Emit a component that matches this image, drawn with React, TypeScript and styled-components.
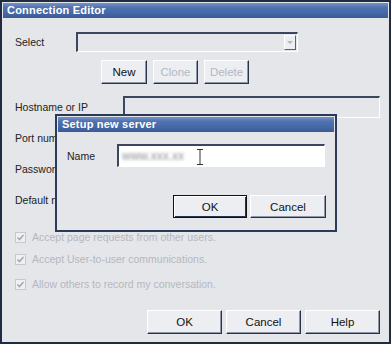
import React from "react";
import styled, { createGlobalStyle } from "styled-components";

const Global = createGlobalStyle`
  html, body { margin: 0; padding: 0; background: #e4e6ea; }
  body { font-family: "Liberation Sans", Arial, sans-serif; font-size: 11px; color: #1a1a1a; }
`;

const Window = styled.div`
  position: relative;
  box-sizing: border-box;
  width: 391px;
  height: 344px;
  border: 2px solid #1f2b40;
  background: #e4e6ea;
  display: flex;
  flex-direction: column;
`;

const TitleBar = styled.div`
  height: 15px;
  margin: 1px 1px 0 1px;
  background: linear-gradient(#7592c6 0%, #4f72b0 30%, #4467a5 70%, #3a5a94 100%);
  color: #fff;
  font-weight: bold;
  font-size: 11px;
  line-height: 15px;
  padding-left: 4px;
  display: flex;
  align-items: center;
  letter-spacing: 0.2px;
`;

const Body = styled.div`
  display: flex;
  flex-direction: column;
  padding: 14px 9px 0 13px;
`;

const Row = styled.div<{ $mt?: number }>`
  display: flex;
  align-items: center;
  margin-top: ${(p) => p.$mt ?? 0}px;
`;

const Label = styled.div<{ $w: number }>`
  width: ${(p) => p.$w}px;
  flex: none;
  white-space: nowrap;
  font-size: 10.5px;
  color: #222;
`;

const Sunken = styled.div<{ $w: number; $h: number; $bg?: string }>`
  box-sizing: border-box;
  width: ${(p) => p.$w}px;
  height: ${(p) => p.$h}px;
  background: ${(p) => p.$bg ?? "#e4e6ea"};
  border-style: solid;
  border-width: 2px 1px 1px 2px;
  border-color: #3a475e #ffffff #ffffff #3a475e;
  position: relative;
  display: flex;
  align-items: center;
  justify-content: flex-end;
`;

const Arrow = styled.div`
  box-sizing: border-box;
  width: 12px;
  height: 15px;
  margin-right: 1px;
  background: #eceef1;
  border: 1px solid;
  border-color: #ffffff #56627a #56627a #ffffff;
  display: flex;
  align-items: center;
  justify-content: center;
  &::after {
    content: "";
    border-left: 3px solid transparent;
    border-right: 3px solid transparent;
    border-top: 3px solid #b2b6bf;
  }
`;

const Button = styled.button<{ $w: number; $h?: number; $disabled?: boolean; $default?: boolean }>`
  box-sizing: border-box;
  width: ${(p) => p.$w}px;
  height: ${(p) => p.$h ?? 24}px;
  padding: 0;
  margin: 0;
  font-family: "Liberation Sans", Arial, sans-serif;
  font-size: 11.5px;
  color: ${(p) => (p.$disabled ? "#b4b8c0" : "#111")};
  background: #eceef1;
  border: 1px solid;
  border-color: ${(p) =>
    p.$default ? "#111 #111 #111 #111" : "#ffffff #26334b #26334b #ffffff"};
  box-shadow: ${(p) =>
    p.$default
      ? "inset 1px 1px #ffffff, inset -1px -1px #26334b"
      : "inset -1px -1px #8d97a9"};
  flex: none;
`;

const ButtonRow = styled.div<{ $gap: number; $ml?: number; $mt?: number; $end?: boolean }>`
  display: flex;
  gap: ${(p) => p.$gap}px;
  margin-left: ${(p) => p.$ml ?? 0}px;
  margin-top: ${(p) => p.$mt ?? 0}px;
  justify-content: ${(p) => (p.$end ? "flex-end" : "flex-start")};
`;

const Check = styled.div<{ $mt: number }>`
  display: flex;
  align-items: center;
  gap: 6px;
  margin-top: ${(p) => p.$mt}px;
  color: #b4b8c0;
  font-size: 10.5px;
`;

const Box = styled.div`
  box-sizing: border-box;
  width: 11px;
  height: 11px;
  border: 1px solid #c4c8d0;
  background: #eef0f3;
  display: flex;
  align-items: center;
  justify-content: center;
`;

const Dialog = styled.div`
  position: absolute;
  left: 53px;
  top: 112px;
  width: 282px;
  height: 118px;
  box-sizing: border-box;
  border: 2px solid #2b3a58;
  background: #e4e6ea;
  display: flex;
  flex-direction: column;
`;

const DialogBody = styled.div`
  display: flex;
  flex-direction: column;
  padding: 12px 9px 0 10px;
`;

const Blurred = styled.span`
  color: #8c9098;
  filter: blur(1.4px);
  padding-left: 3px;
  font-size: 12px;
`;

const IBeam = styled.svg`
  position: absolute;
  left: 77px;
  top: 3px;
`;

export default function App() {
  const checks = [
    { t: "Accept page requests from other users.", mt: 20 },
    { t: "Accept User-to-user communications.", mt: 10 },
    { t: "Allow others to record my conversation.", mt: 13 },
  ];
  return (
    <>
      <Global />
      <Window>
        <TitleBar>Connection Editor</TitleBar>
        <Body>
          <Row>
            <Label $w={61}>Select</Label>
            <Sunken $w={222} $h={20}>
              <Arrow />
            </Sunken>
          </Row>
          <ButtonRow $gap={6} $ml={86} $mt={8}>
            <Button $w={46}>New</Button>
            <Button $w={45} $disabled>Clone</Button>
            <Button $w={45} $disabled>Delete</Button>
          </ButtonRow>
          <Row $mt={12}>
            <Label $w={108}>Hostname or IP</Label>
            <Sunken $w={257} $h={22} />
          </Row>
          <Row $mt={9}>
            <Label $w={108}>Port number</Label>
            <Sunken $w={80} $h={22} />
          </Row>
          <Row $mt={9}>
            <Label $w={108}>Password</Label>
            <Sunken $w={150} $h={22} />
          </Row>
          <Row $mt={9}>
            <Label $w={108}>Default nickname</Label>
            <Sunken $w={150} $h={22} />
          </Row>
          {checks.map((c) => (
            <Check key={c.t} $mt={c.mt}>
              <Box>
                <svg width="9" height="9" viewBox="0 0 9 9">
                  <path d="M1.5 4.5 L3.5 6.5 L7.5 2" stroke="#a4a8b0" strokeWidth="1.6" fill="none" />
                </svg>
              </Box>
              {c.t}
            </Check>
          ))}
          <ButtonRow $gap={4} $mt={20} $end>
            <Button $w={75}>OK</Button>
            <Button $w={75}>Cancel</Button>
            <Button $w={75}>Help</Button>
          </ButtonRow>
        </Body>
        <Dialog>
          <TitleBar>Setup new server</TitleBar>
          <DialogBody>
            <Row>
              <Label $w={50}>Name</Label>
              <Sunken $w={208} $h={23} $bg="#ffffff" style={{ justifyContent: "flex-start" }}>
                <Blurred>www.xxx.xx</Blurred>
                <IBeam width="8" height="16" viewBox="0 0 8 16">
                  <path d="M1 0.5 H7 M4 0.5 V15.5 M1 15.5 H7" stroke="#333" strokeWidth="1" fill="none" />
                </IBeam>
              </Sunken>
            </Row>
            <ButtonRow $gap={3} $mt={28} $end>
              <Button $w={74} $h={23} $default>OK</Button>
              <Button $w={76} $h={23}>Cancel</Button>
            </ButtonRow>
          </DialogBody>
        </Dialog>
      </Window>
    </>
  );
}
